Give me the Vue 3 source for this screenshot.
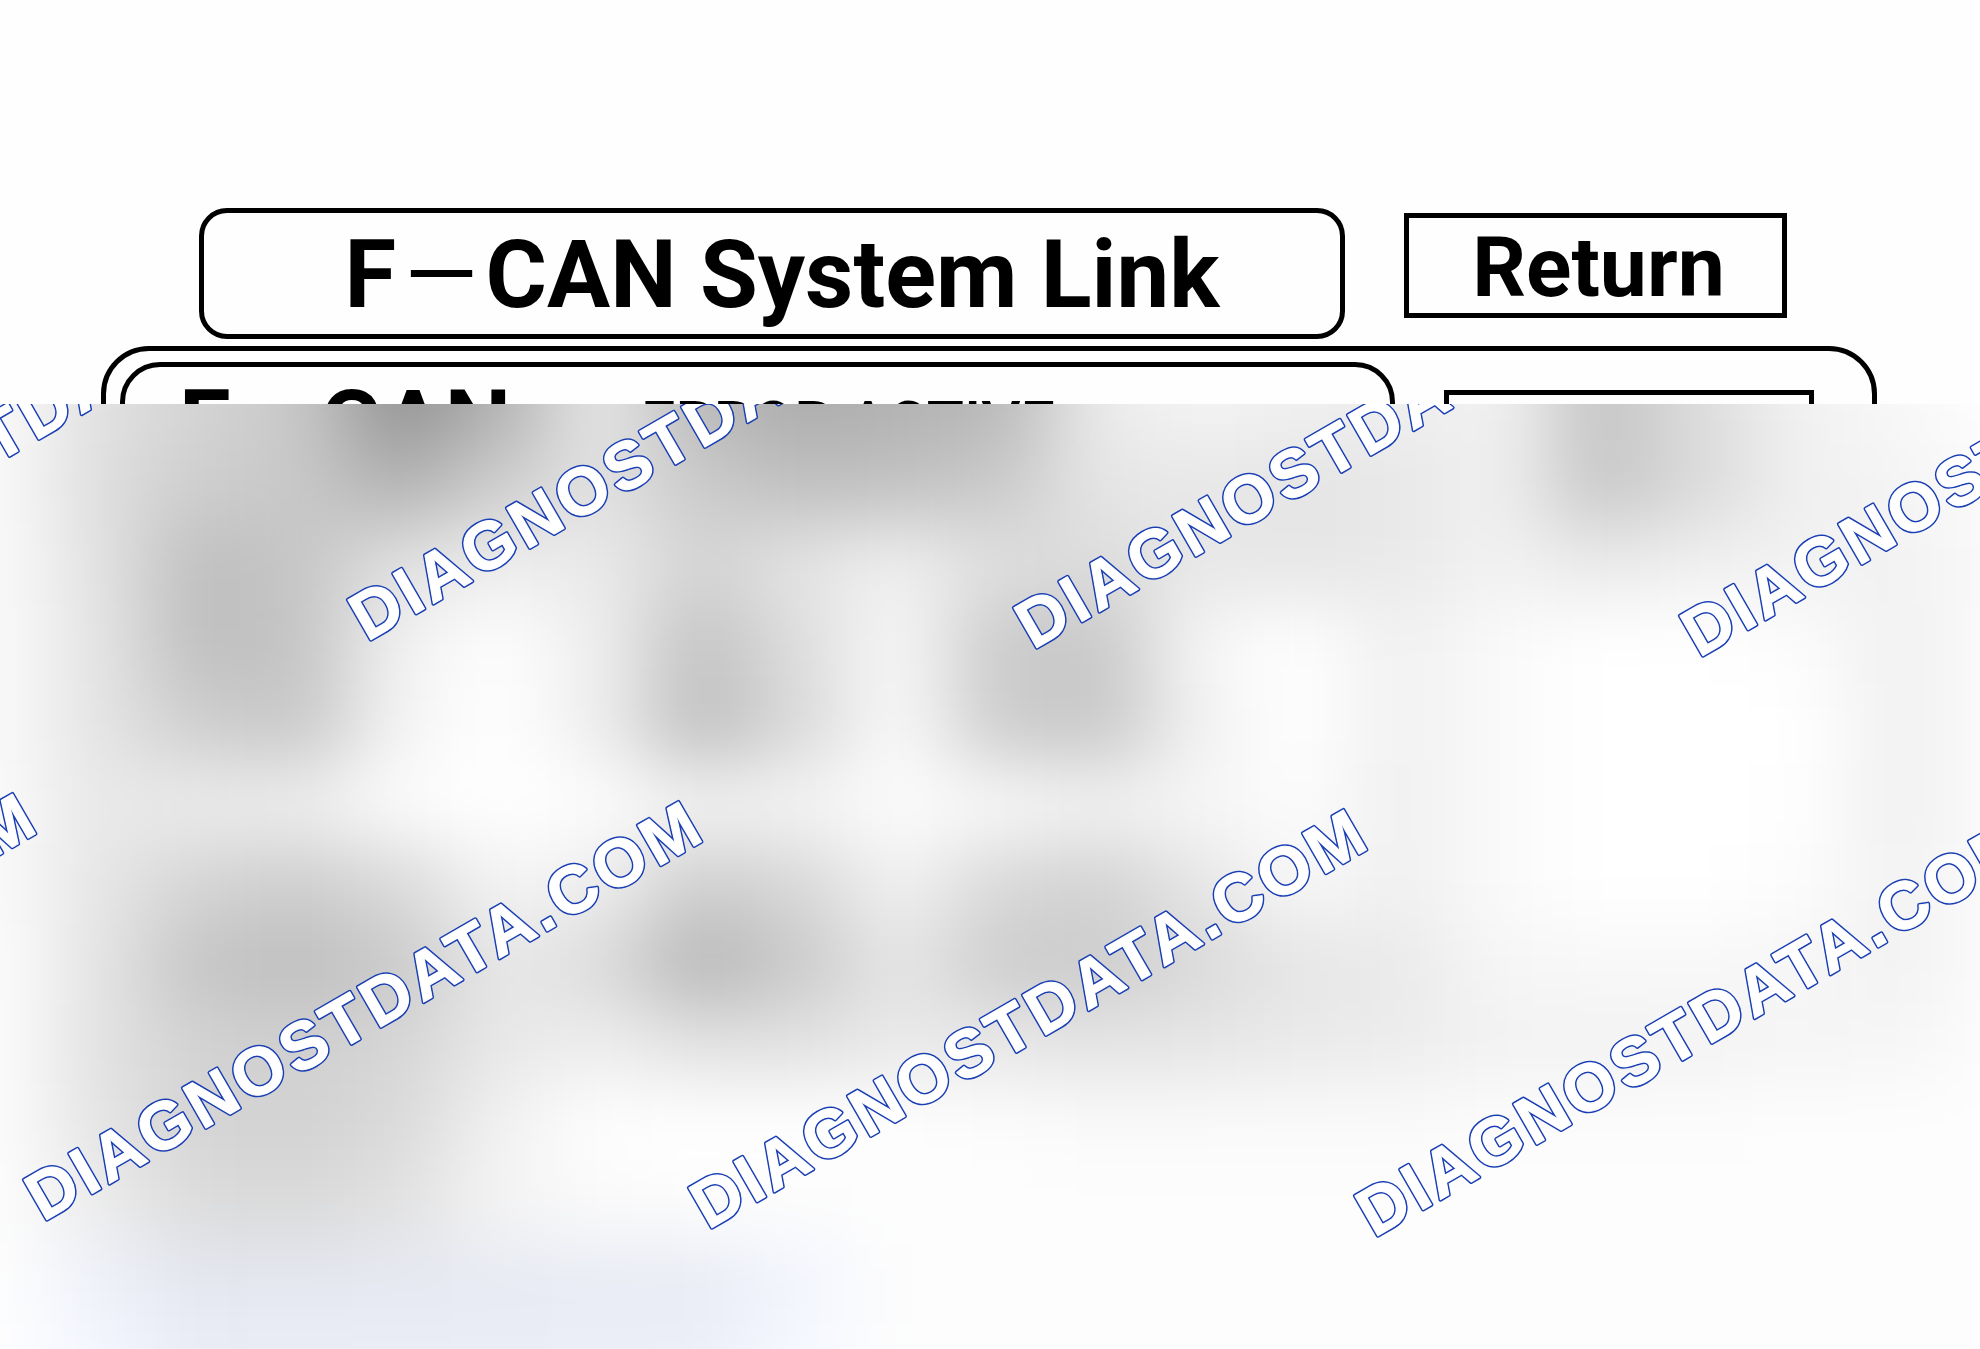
<script setup>
// Brightness of the veil, one row per 80px and one value per 100px
const tones = [
  [250, 225, 212, 200, 146, 178, 232, 186, 172, 178, 184, 236, 244, 240, 238, 242, 196, 220, 242, 248, 254],
  [250, 222, 206, 200, 178, 206, 226, 202, 192, 194, 202, 230, 232, 228, 232, 240, 198, 218, 240, 244, 252],
  [250, 226, 190, 198, 226, 238, 234, 212, 228, 240, 222, 220, 232, 230, 234, 242, 234, 240, 242, 242, 250],
  [250, 228, 190, 196, 242, 254, 238, 194, 222, 248, 202, 200, 246, 255, 240, 250, 255, 255, 252, 240, 252],
  [250, 228, 206, 200, 244, 255, 238, 190, 218, 250, 204, 200, 242, 255, 240, 250, 255, 255, 255, 240, 252],
  [250, 232, 236, 238, 252, 255, 252, 242, 244, 252, 248, 242, 246, 252, 240, 250, 255, 255, 254, 240, 252],
  [250, 230, 212, 206, 218, 244, 238, 206, 216, 242, 216, 210, 230, 248, 240, 250, 255, 255, 252, 242, 252],
  [252, 228, 196, 190, 202, 232, 220, 182, 202, 230, 204, 204, 218, 230, 234, 246, 248, 248, 246, 242, 252],
  [253, 226, 210, 208, 214, 232, 238, 226, 226, 234, 232, 228, 230, 234, 236, 242, 242, 243, 245, 246, 253],
  [253, 228, 212, 210, 218, 242, 254, 255, 255, 254, 252, 250, 250, 250, 250, 252, 252, 252, 253, 253, 253],
  [253, 236, 220, 218, 226, 244, 250, 252, 252, 253, 253, 253, 253, 253, 253, 253, 253, 253, 253, 253, 253],
  [254, 238, 228, 229, 230, 231, 232, 232, 242, 253, 253, 253, 253, 253, 253, 253, 253, 253, 253, 253, 253],
  [254, 244, 234, 235, 235, 235, 236, 237, 246, 253, 253, 253, 253, 253, 253, 253, 253, 253, 253, 253, 253]
]

const cells = tones.flatMap((row, r) =>
  row.map((tone, c) => {
    const blue = r > 10 && c > 0 && c < 9
    return {
      id: `${r}-${c}`,
      x: c * 100 - 50 - (c === 0 ? 150 : 0),
      y: r * 80 - 40 - (r === 0 ? 120 : 0),
      width: c === 0 || c === 20 ? 251 : 101,
      height: r === 0 || r === 12 ? 201 : 81,
      fill: blue ? `rgb(${tone}, ${tone + 3}, ${tone + 12})` : `rgb(${tone}, ${tone}, ${tone})`
    }
  })
)

const marks = [
  { id: 'mark-1', x: -299, y: 230 },
  { id: 'mark-2', x: 367, y: 238 },
  { id: 'mark-3', x: 1033, y: 246 },
  { id: 'mark-4', x: 1699, y: 254 },
  { id: 'mark-5', x: -623, y: 810 },
  { id: 'mark-6', x: 43, y: 818 },
  { id: 'mark-7', x: 708, y: 826 },
  { id: 'mark-8', x: 1374, y: 834 }
]
</script>

<template>
  <main class="page">
    <section class="sheet">
      <header class="top">
        <h1 class="title">F<span class="dash">—</span>CAN System Link</h1>
        <button type="button" class="return">Return</button>
      </header>
      <div class="outer">
        <div class="inner">
          <h2 class="bus">F<span class="dash">—</span>CAN</h2>
          <p class="state">ERROR ACTIVE</p>
        </div>
        <div class="side"></div>
      </div>
    </section>

    <section class="veil">
      <svg class="veil-art" viewBox="0 0 1980 945" preserveAspectRatio="xMinYMin slice">
        <defs>
          <filter id="soften" filterUnits="userSpaceOnUse" x="-200" y="-160" width="2400" height="1300" color-interpolation-filters="sRGB">
            <feGaussianBlur stdDeviation="42 34" />
          </filter>
        </defs>
        <g filter="url(#soften)">
          <rect
            v-for="cell in cells"
            :key="cell.id"
            :x="cell.x"
            :y="cell.y"
            :width="cell.width"
            :height="cell.height"
            :fill="cell.fill"
          />
        </g>
        <!-- blue edge behind, white face on top -->
        <g v-for="mark in marks" :key="mark.id">
          <use class="edge" :href="`#${mark.id}`" />
          <g class="face">
            <text
              :id="mark.id"
              class="mark"
              :transform="`translate(${mark.x} ${mark.y}) rotate(-30)`"
            >DIAGNOSTDATA.COM</text>
          </g>
        </g>
      </svg>
    </section>
  </main>
</template>

<style>
body {
  margin: 0;
  background: #fefefe;
}
</style>

<style scoped>
.page {
  display: flex;
  flex-direction: column;
  min-height: 100vh;
  font-family: Roboto, "Liberation Sans", sans-serif;
  color: #000;
}
.sheet {
  box-sizing: border-box;
  height: 404px;
  padding-top: 208px;
  overflow: hidden;
}
.top {
  display: flex;
  align-items: flex-start;
  gap: 59px;
  padding: 0 193px 0 199px;
}
.title {
  flex: 1;
  box-sizing: border-box;
  height: 131px;
  margin: 0;
  padding-left: 20px;
  border: 5px solid #000;
  border-radius: 28px;
  font-size: 94px;
  font-weight: 700;
  line-height: 124px;
  text-align: center;
  white-space: nowrap;
}
.dash {
  margin: 0 8px;
  font-weight: 400;
}
.return {
  box-sizing: border-box;
  width: 383px;
  height: 105px;
  margin-top: 5px;
  padding: 4px 0 0 6px;
  border: 5px solid #000;
  background: none;
  color: #000;
  font-family: inherit;
  font-size: 84px;
  font-weight: 700;
  line-height: 91px;
}
.outer {
  display: flex;
  align-items: flex-start;
  gap: 49px;
  height: 600px;
  margin: 7px 103px 0 101px;
  padding: 11px 58px 0 14px;
  border: 5px solid #000;
  border-radius: 48px;
}
.inner {
  display: flex;
  flex: 1;
  gap: 130px;
  height: 500px;
  padding-left: 54px;
  border: 5px solid #000;
  border-radius: 40px;
}
.bus {
  margin: 0;
  font-size: 94px;
  font-weight: 700;
  line-height: 116px;
}
.state {
  margin: 0;
  font-size: 61px;
  font-weight: 500;
  line-height: 114px;
}
.side {
  box-sizing: border-box;
  width: 370px;
  height: 400px;
  margin-top: 28px;
  border: 5px solid #000;
}
.veil {
  position: relative;
  flex: 1;
  min-height: 600px;
  overflow: hidden;
}
.veil-art {
  position: absolute;
  inset: 0;
  width: 100%;
  height: 100%;
}
.mark {
  fill: #fff;
  stroke-linejoin: round;
  font-family: "Liberation Sans", Arial, sans-serif;
  font-size: 67px;
  font-weight: 700;
  letter-spacing: 4px;
}
.edge {
  stroke: #1a3fb4;
  stroke-width: 4px;
}
.face {
  stroke: #fff;
  stroke-width: 1px;
}
</style>
